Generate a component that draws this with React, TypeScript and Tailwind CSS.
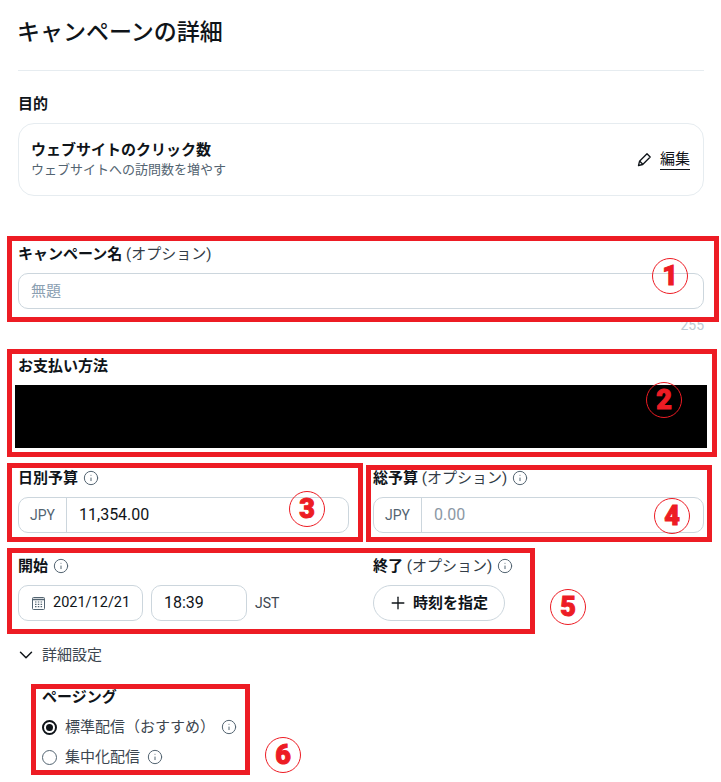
import { ChevronDown, Info, Plus } from "lucide-react";

const font = "font-['Roboto','Noto_Sans_CJK_JP',sans-serif]";

function Tip() {
  return <Info size={16} strokeWidth={1.5} className="shrink-0 text-[#536471]" />;
}

function Label({ bold, rest, tip }: { bold: string; rest?: string; tip?: boolean }) {
  return (
    <div className="flex h-5 items-center gap-[5px] text-[15px] text-[#0f1419]">
      <span>
        <span className="font-bold">{bold}</span>
        {rest ? <span className="text-[#333d47]"> {rest}</span> : null}
      </span>
      {tip ? <Tip /> : null}
    </div>
  );
}

function Money({ value, placeholder }: { value: string; placeholder?: boolean }) {
  return (
    <div className="mt-[9px] flex h-9 items-center rounded-[10px] border border-[#ccd6dd]">
      <div className="flex h-full w-12 items-center justify-center border-r border-[#ccd6dd] text-[14px] text-[#536471]">JPY</div>
      <div className={`pl-3 text-[16px] ${placeholder ? "text-[#8b98a5]" : "text-[#0f1419]"}`}>{value}</div>
    </div>
  );
}

function Calendar() {
  return (
    <svg width="13" height="13" viewBox="0 0 13 13" fill="none" className="shrink-0 text-[#536471]">
      <rect x="0.5" y="0.5" width="12" height="12" rx="1" stroke="currentColor" />
      <path d="M0.5 2.5h12" stroke="currentColor" strokeWidth="1.5" />
      <path
        d="M3 5h1.5M5.8 5h1.5M8.6 5h1.5M3 7.3h1.5M5.8 7.3h1.5M8.6 7.3h1.5M3 9.6h1.5M5.8 9.6h1.5M8.6 9.6h1.5"
        stroke="currentColor"
        strokeWidth="1.2"
      />
    </svg>
  );
}

function PencilIcon() {
  return (
    <svg width="15" height="15" viewBox="0 0 15 15" fill="none" stroke="#0f1419" strokeWidth="1.3" strokeLinejoin="round" className="shrink-0">
      <path d="M1.5 13.5l1-4.2L10 1.8l3.2 3.2-7.5 7.5-4.2 1z" />
      <path d="M2.8 9.2l3 3" />
    </svg>
  );
}

function Box({ className }: { className: string }) {
  return <div className={`pointer-events-none absolute border-[5px] border-[#ed1c24] ${className}`} />;
}

function Num({ n, className }: { n: string; className: string }) {
  return (
    <div
      className={`absolute flex h-[36px] w-[36px] items-center justify-center rounded-full border-[1.5px] border-[#ed1c24] text-[27px] leading-none font-black text-[#ed1c24] [-webkit-text-stroke:1px_#ed1c24] ${className}`}
    >
      {n}
    </div>
  );
}

export default function App() {
  return (
    <div className={`relative h-[782px] w-[721px] overflow-hidden bg-white pr-[17px] pl-[18px] ${font}`}>
      <h1 className="mt-4 -ml-px flex h-8 items-center text-[23px] leading-none font-medium text-[#0f1419]">キャンペーンの詳細</h1>
      <div className="mt-[22px] border-t border-[#e6ecf0]" />

      <div className="mt-[23px]">
        <Label bold="目的" />
      </div>
      <div className="mt-[9px] flex h-[73px] items-center justify-between rounded-2xl border border-[#e6ecf0] pr-[13px] pl-3">
        <div>
          <div className="text-[15px] leading-5 font-bold text-[#0f1419]">ウェブサイトのクリック数</div>
          <div className="text-[13px] leading-5 text-[#536471]">ウェブサイトへの訪問数を増やす</div>
        </div>
        <div className="flex items-center gap-2 text-[15px] text-[#0f1419]">
          <PencilIcon />
          <span className="border-b border-[#0f1419] leading-5">編集</span>
        </div>
      </div>

      <div className="mt-[48px]">
        <Label bold="キャンペーン名" rest="(オプション)" />
      </div>
      <div className="mt-[9px] flex h-9 items-center rounded-[10px] border border-[#ccd6dd] px-3 text-[15px] text-[#8ba0b2]">無題</div>
      <div className="mt-2 h-4 text-right text-[14px] leading-4 text-[#bccad4]">255</div>

      <div className="mt-[23px]">
        <Label bold="お支払い方法" />
      </div>
      <div className="mt-[9px] -ml-[3px] mr-[-3px] h-[63px] bg-black" />

      <div className="mt-5 grid grid-cols-2 gap-6">
        <div>
          <Label bold="日別予算" tip />
          <Money value="11,354.00" />
        </div>
        <div>
          <Label bold="総予算" rest="(オプション)" tip />
          <Money value="0.00" placeholder />
        </div>
      </div>

      <div className="mt-[23px] grid grid-cols-2 gap-6">
        <div>
          <Label bold="開始" tip />
          <div className="mt-[9px] flex h-9 items-center gap-2 text-[#0f1419]">
            <div className="flex h-full w-[125px] items-center gap-2 rounded-[10px] border border-[#ccd6dd] pl-[13px] text-[14.5px]">
              <Calendar />
              <span>2021/12/21</span>
            </div>
            <div className="flex h-full w-[96px] items-center rounded-[10px] border border-[#ccd6dd] pl-3 text-[16px]">18:39</div>
            <span className="text-[14px] text-[#3c4650]">JST</span>
          </div>
        </div>
        <div>
          <Label bold="終了" rest="(オプション)" tip />
          <div className="mt-[9px] flex h-9 w-[132px] items-center gap-[5px] rounded-full border border-[#ccd6dd] pl-[14px] text-[15px] font-bold text-[#0f1419]">
            <Plus size={20} strokeWidth={1.6} />
            <span>時刻を指定</span>
          </div>
        </div>
      </div>

      <div className="mt-6 flex h-5 items-center gap-[5px] text-[15px] text-[#3c4650]">
        <ChevronDown size={22} strokeWidth={1.6} className="-ml-[3px] text-[#0f1419]" />
        <span>詳細設定</span>
      </div>

      <div className="mt-[22px] ml-6">
        <Label bold="ページング" />
        <div className="mt-[10px] flex h-5 items-center text-[15px] text-[#3c4650]">
          <span className="flex h-[15px] w-[15px] items-center justify-center rounded-full border-2 border-[#0f1419]">
            <span className="h-[7px] w-[7px] rounded-full bg-[#0f1419]" />
          </span>
          <span className="ml-[8px]">標準配信（おすすめ）</span>
          <span className="ml-[6px]"><Tip /></span>
        </div>
        <div className="mt-[10px] flex h-5 items-center text-[15px] text-[#3c4650]">
          <span className="h-[15px] w-[15px] rounded-full border border-[#536471]" />
          <span className="ml-[8px]">集中化配信</span>
          <span className="ml-[7px]"><Tip /></span>
        </div>
      </div>

      <Box className="top-[236px] left-[7px] h-[86px] w-[712px]" />
      <Box className="top-[349px] left-[7px] h-[108px] w-[710px]" />
      <Box className="top-[463px] left-[7px] h-[79px] w-[356px]" />
      <Box className="top-[465px] left-[366px] h-[77px] w-[346px]" />
      <Box className="top-[548px] left-[7px] h-[86px] w-[528px]" />
      <Box className="top-[684px] left-[31px] h-[91px] w-[219px]" />

      <Num n="1" className="top-[258px] left-[652px]" />
      <Num n="2" className="top-[382px] left-[646px]" />
      <Num n="3" className="top-[491px] left-[289px]" />
      <Num n="4" className="top-[498px] left-[654px]" />
      <Num n="5" className="top-[589px] left-[550px]" />
      <Num n="6" className="top-[737px] left-[265px]" />
    </div>
  );
}
